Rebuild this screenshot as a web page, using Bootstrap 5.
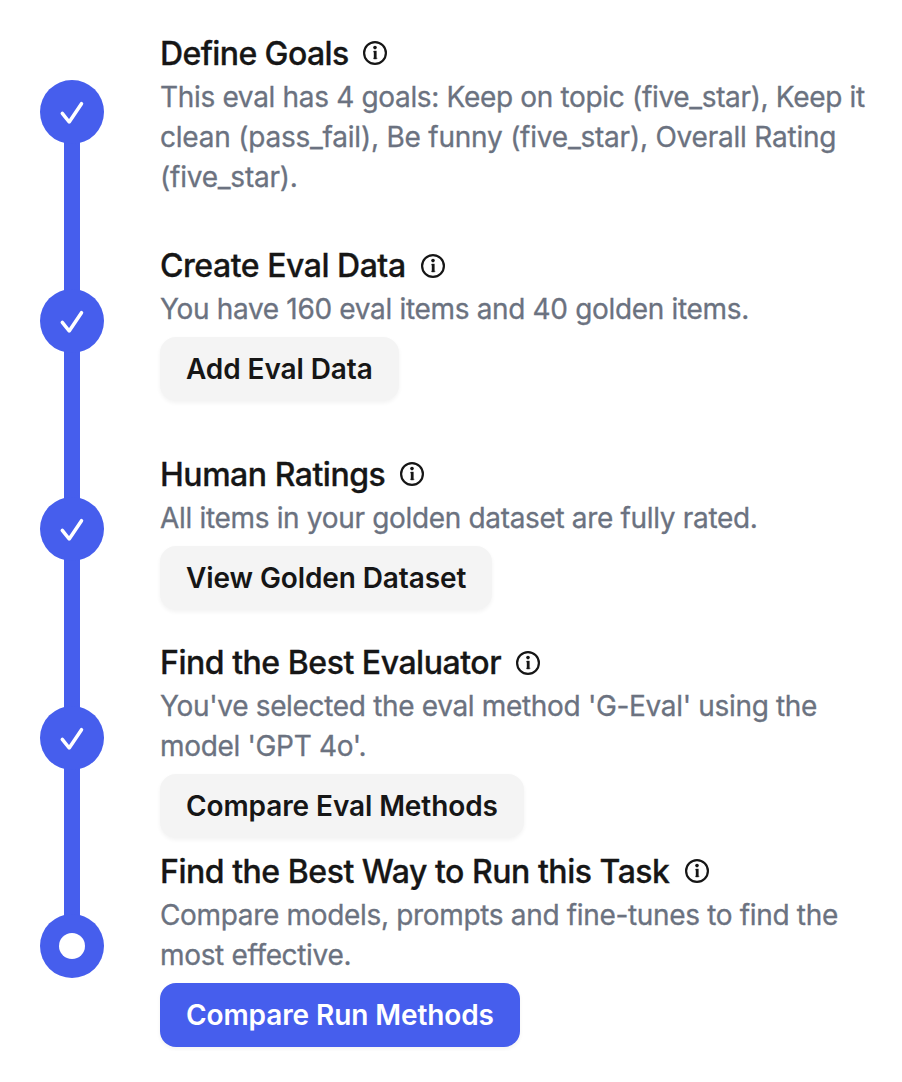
<!DOCTYPE html>
<html lang="en"><head><meta charset="utf-8"><title>Eval steps</title>
<meta name="viewport" content="width=device-width, initial-scale=1">
<link href="https://cdn.jsdelivr.net/npm/bootstrap@5.3.0/dist/css/bootstrap.min.css" rel="stylesheet">
<style>
body{font-family:Inter,sans-serif;color:#161616;background:#fff}
.steps{padding:8px 0 0 40px}
.step{display:grid;grid-template-columns:64px 1fr;column-gap:56px;height:208.5px}
.rail{position:relative;display:flex;align-items:center;justify-content:center}
.rail::before{content:"";position:absolute;left:24px;width:16px;top:0;bottom:0;background:#465eed}
.step:first-child .rail::before{top:50%}
.step:last-child .rail::before{bottom:50%}
.dot{position:relative;width:64px;height:64px;background:#465eed}
.dot svg{display:block}
.step-body{padding-top:3px}
.step-title{font-size:32px;line-height:46px;font-weight:500;white-space:nowrap;letter-spacing:-.47px;gap:15px;-webkit-text-stroke:.3px currentColor}
.step-title svg{margin-top:-1px}
.title-tight{letter-spacing:-.6px;gap:14px}
.desc{font-size:28px;line-height:40px;color:#6b7280;white-space:nowrap;letter-spacing:-.33px;-webkit-text-stroke:.3px currentColor}
.desc-wide{letter-spacing:-.22px}
.btn-step{height:64px;border-radius:16px;font-size:28px;font-weight:600;padding:0 26px;line-height:64px;border:0;margin-top:8px;background:#f4f4f4;color:#161616;box-shadow:0 2px 4px #0000000d;white-space:nowrap;letter-spacing:-.1px}
.btn-main{background:#465eed;color:#fff}
</style></head><body>
<svg width="0" height="0" class="position-absolute" aria-hidden="true">
<symbol id="info" viewBox="0 0 24 24"><circle cx="12" cy="12" r="10.9" fill="none" stroke="#161616" stroke-width="2.2"/><circle cx="12" cy="6.6" r="1.8" fill="#161616"/><path d="M12.2 9.8v8.4" fill="none" stroke="#161616" stroke-width="2.8"/><path d="M10 10.7h2.4M10 17.4h4.4" fill="none" stroke="#161616" stroke-width="1.2" opacity=".5"/></symbol>
<symbol id="check" viewBox="0 0 64 64"><path d="M22.3 33.4L29.2 42 41.5 23.7" fill="none" stroke="#fff" stroke-width="3.5" stroke-linecap="round" stroke-linejoin="round"/></symbol>
</svg>
<main class="steps">
<section class="step"><div class="rail"><span class="dot rounded-circle"><svg width="64" height="64"><use href="#check"/></svg></span></div><div class="step-body d-flex flex-column justify-content-center align-items-start"><div class="step-title title-tight d-flex align-items-center"><span>Define Goals</span><svg width="24" height="24"><use href="#info"/></svg></div><div class="desc">This eval has 4 goals: Keep on topic (five_star), Keep it<br><span class="desc-wide">clean (pass_fail), Be funny (five_star), Overall Rating</span><br><span class="desc-wide">(five_star).</span></div></div></section>
<section class="step"><div class="rail"><span class="dot rounded-circle"><svg width="64" height="64"><use href="#check"/></svg></span></div><div class="step-body d-flex flex-column justify-content-center align-items-start"><div class="step-title d-flex align-items-center"><span>Create Eval Data</span><svg width="24" height="24"><use href="#info"/></svg></div><div class="desc">You have 160 eval items and 40 golden items.</div><button class="btn btn-step">Add Eval Data</button></div></section>
<section class="step"><div class="rail"><span class="dot rounded-circle"><svg width="64" height="64"><use href="#check"/></svg></span></div><div class="step-body d-flex flex-column justify-content-center align-items-start"><div class="step-title d-flex align-items-center"><span>Human Ratings</span><svg width="24" height="24"><use href="#info"/></svg></div><div class="desc">All items in your golden dataset are fully rated.</div><button class="btn btn-step">View Golden Dataset</button></div></section>
<section class="step"><div class="rail"><span class="dot rounded-circle"><svg width="64" height="64"><use href="#check"/></svg></span></div><div class="step-body d-flex flex-column justify-content-center align-items-start"><div class="step-title d-flex align-items-center"><span>Find the Best Evaluator</span><svg width="24" height="24"><use href="#info"/></svg></div><div class="desc">You've selected the eval method 'G-Eval' using the<br>model 'GPT 4o'.</div><button class="btn btn-step">Compare Eval Methods</button></div></section>
<section class="step"><div class="rail"><span class="dot rounded-circle"><svg width="64" height="64"><circle cx="32" cy="32" r="13" fill="#fff"/></svg></span></div><div class="step-body d-flex flex-column justify-content-center align-items-start"><div class="step-title d-flex align-items-center"><span>Find the Best Way to Run this Task</span><svg width="24" height="24"><use href="#info"/></svg></div><div class="desc">Compare models, prompts and fine-tunes to find the<br>most effective.</div><button class="btn btn-step btn-main">Compare Run Methods</button></div></section>
</main>
<script src="https://cdn.jsdelivr.net/npm/bootstrap@5.3.0/dist/js/bootstrap.bundle.min.js"></script></body></html>
